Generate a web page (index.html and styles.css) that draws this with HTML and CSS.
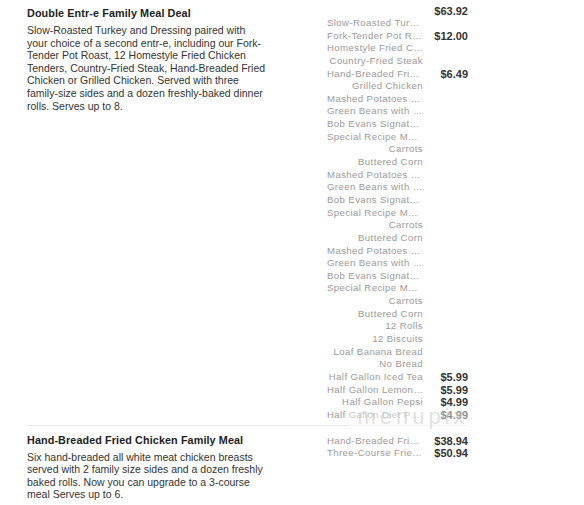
FILE: index.html
```html
<!DOCTYPE html>
<html>
<head>
<meta charset="utf-8">
<link rel="stylesheet" href="styles.css">
</head>
<body>
<div class="menu">
  <section class="dish">
    <div class="info">
      <h3 class="title">Double Entr-e Family Meal Deal</h3>
      <p class="desc">Slow-Roasted Turkey and Dressing paired with your choice of a second entr-e, including our Fork-Tender Pot Roast, 12 Homestyle Fried Chicken Tenders, Country-Fried Steak, Hand-Breaded Fried Chicken or Grilled Chicken. Served with three family-size sides and a dozen freshly-baked dinner rolls. Serves up to 8.</p>
    </div>
    <div class="opts">
      <div class="row head"><span class="name"></span><span class="price">$63.92</span></div>
      <div class="row"><span class="name">Slow-Roasted Turkey and Dressing</span><span class="price"></span></div>
      <div class="row"><span class="name">Fork-Tender Pot Roast</span><span class="price">$12.00</span></div>
      <div class="row"><span class="name">Homestyle Fried Chicken Tenders</span><span class="price"></span></div>
      <div class="row"><span class="name">Country-Fried Steak</span><span class="price"></span></div>
      <div class="row"><span class="name">Hand-Breaded Fried Chicken</span><span class="price">$6.49</span></div>
      <div class="row"><span class="name">Grilled Chicken</span><span class="price"></span></div>
      <div class="row"><span class="name">Mashed Potatoes and Gravy</span><span class="price"></span></div>
      <div class="row"><span class="name">Green Beans with Ham</span><span class="price"></span></div>
      <div class="row"><span class="name">Bob Evans Signature Mac</span><span class="price"></span></div>
      <div class="row"><span class="name">Special Recipe Macaroni</span><span class="price"></span></div>
      <div class="row"><span class="name">Carrots</span><span class="price"></span></div>
      <div class="row"><span class="name">Buttered Corn</span><span class="price"></span></div>
      <div class="row"><span class="name">Mashed Potatoes and Gravy</span><span class="price"></span></div>
      <div class="row"><span class="name">Green Beans with Ham</span><span class="price"></span></div>
      <div class="row"><span class="name">Bob Evans Signature Mac</span><span class="price"></span></div>
      <div class="row"><span class="name">Special Recipe Macaroni</span><span class="price"></span></div>
      <div class="row"><span class="name">Carrots</span><span class="price"></span></div>
      <div class="row"><span class="name">Buttered Corn</span><span class="price"></span></div>
      <div class="row"><span class="name">Mashed Potatoes and Gravy</span><span class="price"></span></div>
      <div class="row"><span class="name">Green Beans with Ham</span><span class="price"></span></div>
      <div class="row"><span class="name">Bob Evans Signature Mac</span><span class="price"></span></div>
      <div class="row"><span class="name">Special Recipe Macaroni</span><span class="price"></span></div>
      <div class="row"><span class="name">Carrots</span><span class="price"></span></div>
      <div class="row"><span class="name">Buttered Corn</span><span class="price"></span></div>
      <div class="row"><span class="name">12 Rolls</span><span class="price"></span></div>
      <div class="row"><span class="name">12 Biscuits</span><span class="price"></span></div>
      <div class="row"><span class="name">Loaf Banana Bread</span><span class="price"></span></div>
      <div class="row"><span class="name">No Bread</span><span class="price"></span></div>
      <div class="row"><span class="name">Half Gallon Iced Tea</span><span class="price">$5.99</span></div>
      <div class="row"><span class="name">Half Gallon Lemonade</span><span class="price">$5.99</span></div>
      <div class="row"><span class="name">Half Gallon Pepsi</span><span class="price">$4.99</span></div>
      <div class="row"><span class="name">Half Gallon Diet Pepsi</span><span class="price">$4.99</span></div>
    </div>
  </section>
  <section class="dish sep">
    <div class="info">
      <h3 class="title">Hand-Breaded Fried Chicken Family Meal</h3>
      <p class="desc">Six hand-breaded all white meat chicken breasts served with 2 family size sides and a dozen freshly baked rolls. Now you can upgrade to a 3-course meal Serves up to 6.</p>
    </div>
    <div class="opts">
      <div class="row"><span class="name">Hand-Breaded Fried Chicken</span><span class="price">$38.94</span></div>
      <div class="row"><span class="name">Three-Course Fried Chicken</span><span class="price">$50.94</span></div>
    </div>
  </section>
  <div class="watermark">menupix</div>
</div>
</body>
</html>
```

FILE: styles.css
```css
html, body {
  margin: 0;
  padding: 0;
  background: #fff;
}
body {
  font-family: "Liberation Sans", Arial, sans-serif;
  color: #333;
}
.menu {
  position: relative;
  width: 441px;
  margin-left: 27px;
  padding-top: 5px;
}
.dish {
  display: flex;
  justify-content: space-between;
  padding-bottom: 3px;
}
.dish.sep {
  border-top: 1px solid #e8e8e8;
  padding-top: 6px;
}
.sep .opts {
  padding-top: 3px;
}
.info {
  width: 240px;
}
.title {
  margin: 1px 0 0;
  font-size: 10.8px;
  font-weight: bold;
  color: #222;
  line-height: 14px;
  letter-spacing: 0.1px;
}
.desc {
  margin: 4px 0 0;
  font-size: 10.5px;
  line-height: 12.6px;
  color: #333;
}
.opts {
  display: flex;
  flex-direction: column;
  width: 141px;
}
.row {
  display: grid;
  grid-template-columns: 96px 40px;
  column-gap: 5px;
  height: 12.65px;
  line-height: 12.65px;
  align-items: center;
}
.row.head {
  height: 12px;
  line-height: 12px;
}
.name {
  font-size: 9.6px;
  color: #9a9a9a;
  text-align: right;
  white-space: nowrap;
  overflow: hidden;
  text-overflow: ellipsis;
  letter-spacing: 0.4px;
}
.price {
  font-size: 11px;
  font-weight: bold;
  color: #333;
  text-align: right;
}
.watermark {
  position: absolute;
  left: 322px;
  top: 407px;
  width: 120px;
  padding-left: 4px;
  text-align: center;
  font-size: 22px;
  letter-spacing: 4px;
  color: rgba(195,195,195,0.5);
  background: rgba(255,255,255,0.45);
  line-height: 20px;
  pointer-events: none;
}
```
